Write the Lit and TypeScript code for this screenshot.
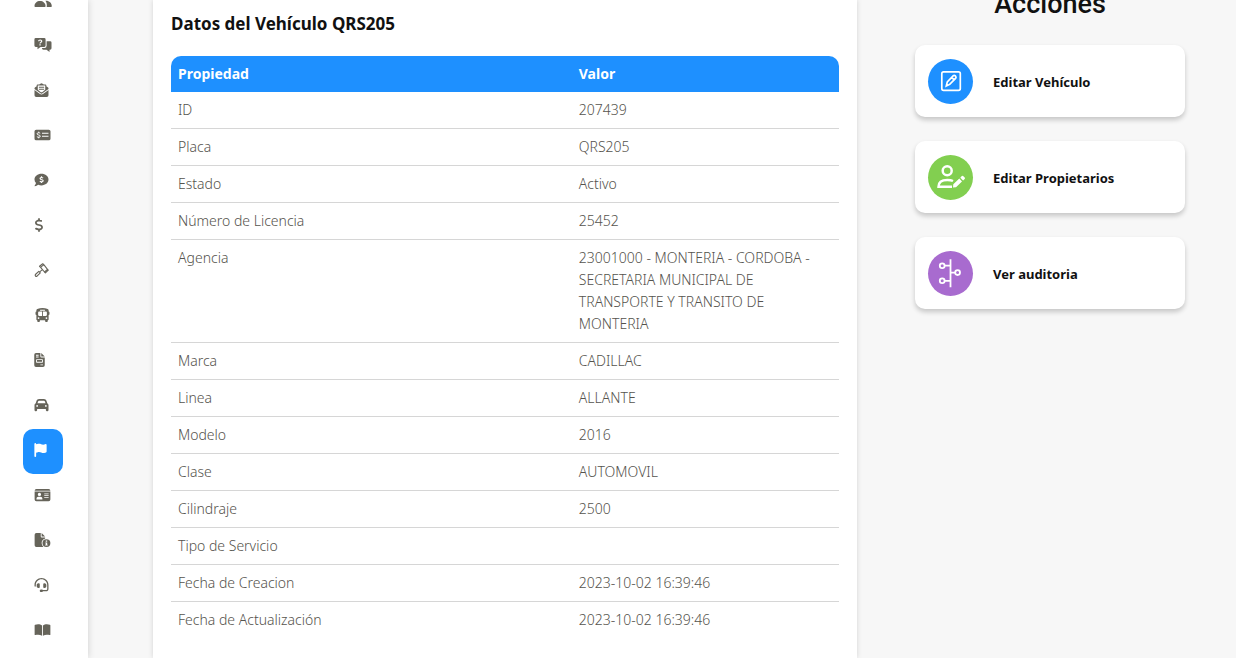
import { LitElement, html, css, svg } from "lit";
import type { TemplateResult } from "lit";
import { customElement } from "lit/decorators.js";
import { classMap } from "lit/directives/class-map.js";

interface NavIcon {
  label: string;
  width: number;
  viewBox: string;
  art: TemplateResult;
  active?: boolean;
}

interface Action {
  label: string;
  tone: string;
  art: TemplateResult;
}

const NAV: NavIcon[] = [
  {
    label: "Usuarios",
    width: 18,
    viewBox: "0 0 18 14",
    art: svg`<circle cx="6" cy="3.5" r="3.5"/><path d="M0.5 13.2C0.5 10 3 8 6 8s5.600 2 5.600 5.200q0 .8-.8.8H1.300q-.8 0-.8-.8z"/><path d="M11.400 7.800c3.400-.4 6.400 2 6.400 5.400q0 .8-.8.8h-4.300c.4-2.600-.1-4.600-1.300-6.200z"/><path d="M10.600 6.900a3.500 3.500 0 1 0 0-6.600q2 3 0 6.600z"/>`,
  },
  {
    label: "Preguntas",
    width: 18,
    viewBox: "0 0 18 14",
    art: svg`<path fill-rule="evenodd" d="M1.800 0h8.400Q11.600 0 11.600 1.400v6.200Q11.600 9 10.200 9H6.600L3.500 11.200V9H1.800Q.4 9 .4 7.600V1.400Q.4 0 1.800 0zM4.100 3.300h1.200c0-.5.3-.7.800-.7s.9.2.9.7-.3.7-.8 1c-.5.3-.7.7-.7 1.200h1.200c0-.4.2-.5.6-.8.6-.4 1-.8 1-1.500 0-1.100-.9-1.800-2.100-1.800s-2.100.7-2.100 1.900zM5.400 6.200v1.200h1.300V6.200z"/><path d="M12.600 3.200h3.500q1.400 0 1.400 1.400v5.700q0 1.400-1.400 1.400h-.6V14l-3-2.300H9.300q-1.300 0-1.400-1.700h2.600q2.100 0 2.100-2.200z"/>`,
  },
  {
    label: "Correo",
    width: 15,
    viewBox: "0 0 512 512",
    art: svg`<path d="M215 24q41-30 82 0l42 28h61q32 0 32 32v34l65 48q15 12 15 31v19L306 370q-50 38-100 0L0 216v-19q0-19 15-31l65-48V84q0-32 32-32h61zM120 90v160l113 84q23 17 46 0l113-84V90zM160 135h192v36H160zm0 73h192v36H160zM0 256l187 140q69 50 138 0l187-140v192q0 64-64 64H64q-64 0-64-64z" fill-rule="evenodd"/>`,
  },
  {
    label: "Comparendos",
    width: 17,
    viewBox: "0 0 16 14",
    art: svg`<path fill-rule="evenodd" d="M1.700 1.700h12.600Q16 1.700 16 3.300v7.400q0 1.600-1.700 1.600H1.700Q0 12.300 0 10.700V3.300Q0 1.700 1.700 1.700zM7.500 4.700v1h6.500v-1zm0 3v1h6.500v-1z"/><path d="M5.700 5.200C4.700 4.500 2.600 4.600 2.600 5.800c0 1.600 3.200.8 3.200 2.400 0 1.300-2.300 1.300-3.400.5M4.200 3.700v1m0 4.500v1.100" fill="none" stroke="#fff" stroke-width="1"/>`,
  },
  {
    label: "Cobros",
    width: 15,
    viewBox: "0 0 14 14",
    art: svg`<path d="M7 .8c3.900 0 7 2.500 7 5.800s-3.100 5.800-7 5.800q-1.700 0-3.300-.6Q2 13.100.4 13.200q-.6-.1-.2-.6 1-1.100 1.300-2.500Q0 8.600 0 6.600C0 3.300 3.100.8 7 .8z"/><path d="M8.600 5C7.700 4.300 5.500 4.400 5.500 5.600c0 1.600 3.200.7 3.200 2.200 0 1.300-2.300 1.300-3.400.5M7 3.300v1m0 4.500v1.100" fill="none" stroke="#fff" stroke-width="1.100"/>`,
  },
  {
    label: "Pagos",
    width: 10,
    viewBox: "0 0 320 512",
    art: svg`<path d="M160 0c17.700 0 32 14.300 32 32V67.700c1.600 .2 3.100 .4 4.700 .7c.4 .1 .7 .1 1.100 .2l48 8.800c17.400 3.200 28.900 19.900 25.700 37.200s-19.900 28.900-37.200 25.700l-47.500-8.700c-31.300-4.600-58.900-1.500-78.300 6.200s-27.200 18.300-29 28.100c-2 10.700-.5 16.700 1.200 20.400c1.800 3.900 5.500 8.300 12.800 13.200c16.300 10.700 41.300 17.700 73.700 26.300l2.900 .8c28.600 7.600 63.600 16.800 89.600 33.800c14.200 9.300 27.600 21.900 35.900 39.500c8.500 17.900 10.300 37.900 6.400 59.200c-6.900 38-33.100 63.400-65.600 76.700c-13.700 5.600-28.600 9.200-44.400 11V480c0 17.700-14.300 32-32 32s-32-14.300-32-32V445.100c-.4-.1-.9-.1-1.300-.2c-24.600-3.800-64.700-14.300-91.700-26.300c-16.100-7.200-23.400-26.100-16.200-42.200s26.100-23.400 42.200-16.200c20.900 9.300 55.300 18.500 75.200 21.600c31.900 4.700 58.200 2 76-5.300c16.900-6.900 24.600-16.900 26.800-28.900c1.900-10.600 .4-16.700-1.300-20.400c-1.900-4-5.600-8.400-13-13.300c-16.400-10.700-41.500-17.700-74-26.300l-2.800-.7C119.400 279.300 84.400 270 58.400 253c-14.200-9.300-27.500-22-35.800-39.600c-8.400-17.900-10.100-37.900-6.100-59.200C23.700 116 52.300 91.200 84.800 78.300c13.300-5.300 27.900-8.900 43.200-11V32c0-17.700 14.300-32 32-32z"/>`,
  },
  {
    label: "Resoluciones",
    width: 15,
    viewBox: "0 0 14 14",
    art: svg`<g fill="none" stroke="currentColor" stroke-width="1.100" stroke-linejoin="round" stroke-linecap="round"><path d="M5 3.300L8.200.7l1.100 1-3.200 2.700zM10 9l3-2.700.8.9-2.900 2.700zM6.100 4.400L10 9M9.300 1.700L13 6.300M7.600 6.900L5.800 8.400M.9 11.500l3.400-3.200 1.500 1.500-3.300 3.400q-.8.5-1.500-.2-.5-.8-.1-1.500z"/></g>`,
  },
  {
    label: "Transporte",
    width: 17,
    viewBox: "0 0 576 512",
    art: svg`<path d="M288 0C422.400 0 512 35.200 512 80V128c17.700 0 32 14.300 32 32v64c0 17.700-14.300 32-32 32V416c0 17.700-14.300 32-32 32v32c0 17.700-14.300 32-32 32H416c-17.700 0-32-14.300-32-32V448H192v32c0 17.700-14.300 32-32 32H128c-17.700 0-32-14.300-32-32V448c-17.700 0-32-14.300-32-32V256c-17.700 0-32-14.300-32-32V160c0-17.700 14.300-32 32-32V80C64 35.200 153.600 0 288 0zM128 160v96c0 17.700 14.300 32 32 32H272V128H160c-17.700 0-32 14.300-32 32zM304 288H416c17.700 0 32-14.300 32-32V160c0-17.700-14.300-32-32-32H304V288zM144 400a32 32 0 1 0 0-64 32 32 0 1 0 0 64zm288 0a32 32 0 1 0 0-64 32 32 0 1 0 0 64zM384 80c0-8.800-7.200-16-16-16H208c-8.800 0-16 7.200-16 16s7.200 16 16 16H368c8.800 0 16-7.200 16-16z"/>`,
  },
  {
    label: "Facturas",
    width: 11,
    viewBox: "0 0 384 512",
    art: svg`<path fill-rule="evenodd" d="M64 0h160v128q0 32 32 32h128v288q0 64-64 64H64Q0 512 0 448V64Q0 0 64 0zm192 0l128 128H256zM64 64v32h96V64zm0 64v32h96v-32zm32 96q-32 0-32 32v64q0 32 32 32h192q32 0 32-32v-64q0-32-32-32zm0 32h192v64H96zm128 160v32h96v-32z"/>`,
  },
  {
    label: "Trámites",
    width: 15,
    viewBox: "0 0 512 512",
    art: svg`<path d="M135.200 117.400L109.100 192H402.900l-26.100-74.600C372.300 104.600 360.200 96 346.600 96H165.400c-13.600 0-25.700 8.600-30.200 21.400zM39.600 196.800L74.800 96.300C88.300 57.800 124.600 32 165.400 32H346.600c40.800 0 77.100 25.800 90.600 64.300l35.200 100.500c23.200 9.600 39.600 32.500 39.600 59.200V448c0 17.700-14.300 32-32 32H448c-17.700 0-32-14.300-32-32V400H96v48c0 17.700-14.300 32-32 32H32c-17.700 0-32-14.300-32-32V256c0-26.700 16.400-49.600 39.600-59.200zM128 288a32 32 0 1 0-64 0 32 32 0 1 0 64 0zm288 32a32 32 0 1 0 0-64 32 32 0 1 0 0 64z"/>`,
  },
  {
    label: "Vehículos",
    width: 13,
    viewBox: "0 0 448 512",
    active: true,
    art: svg`<path d="M64 32C64 14.300 49.700 0 32 0S0 14.300 0 32V480c0 17.700 14.300 32 32 32s32-14.300 32-32V352l64.300-16.100c41.100-10.300 84.600-5.500 122.500 13.400c44.200 22.100 95.500 24.800 141.700 7.400l34.700-13c12.500-4.700 20.800-16.600 20.800-30V66.100c0-23-24.200-38-44.800-27.700l-9.600 4.800c-46.300 23.200-100.800 23.200-147.100 0c-35.100-17.600-75.400-22-113.500-12.500L64 48V32z"/>`,
  },
  {
    label: "Licencias",
    width: 17,
    viewBox: "0 0 576 512",
    art: svg`<path fill-rule="evenodd" d="M0 96q0-64 64-64h448q64 0 64 64zm0 32h576v288q0 64-64 64H64q-64 0-64-64zm176 48a60 60 0 1 0 0 120 60 60 0 1 0 0-120zM64 405q0 11 11 11h202q11 0 11-11 0-85-80-85h-64q-80 0-80 85zM352 200v32h160v-32zm0 64v32h160v-32zm0 64v32h160v-32z"/>`,
  },
  {
    label: "Informes",
    width: 17,
    viewBox: "0 0 576 512",
    art: svg`<path fill-rule="evenodd" d="M0 64Q0 0 64 0h160v128q0 32 32 32h128v38q-128 38-128 170 0 88 65 144H64q-64 0-64-64zM256 0l128 128H256zM432 224a144 144 0 1 0 0 288 144 144 0 1 0 0-288zm-26 48h54v50h-54zm-16 74h70v80h20v32H384v-32h22v-48h-16z"/>`,
  },
  {
    label: "Soporte",
    width: 15,
    viewBox: "0 0 512 512",
    art: svg`<path d="M256 48C141 48 48 141 48 256v40c0 13-11 24-24 24S0 309 0 296V256C0 115 115 0 256 0S512 115 512 256V400c0 49-39 88-88 88H313c-8 14-24 24-41 24H240c-27 0-48-21-48-48s21-48 48-48h32c18 0 33 10 41 24H424c22 0 40-18 40-40V256C464 141 371 48 256 48zM144 192h16c18 0 32 14 32 32V336c0 18-14 32-32 32H144c-35 0-64-29-64-64V256c0-35 29-64 64-64zm208 0h16c35 0 64 29 64 64v48c0 35-29 64-64 64H352c-18 0-32-14-32-32V224c0-18 14-32 32-32z"/>`,
  },
  {
    label: "Manual",
    width: 17,
    viewBox: "0 0 576 512",
    art: svg`<path d="M272 88v376c-70-40-160-48-242-24Q0 450 0 424V92q0-22 20-30c84-34 190-26 252 26zM304 88v376c70-40 160-48 242-24q30 10 30-16V92q0-22-20-30c-84-34-190-26-252 26z"/>`,
  },
];

const ROWS: [string, string][] = [
  ["ID", "207439"],
  ["Placa", "QRS205"],
  ["Estado", "Activo"],
  ["Número de Licencia", "25452"],
  ["Agencia", "23001000 - MONTERIA - CORDOBA - SECRETARIA MUNICIPAL DE TRANSPORTE Y TRANSITO DE MONTERIA"],
  ["Marca", "CADILLAC"],
  ["Linea", "ALLANTE"],
  ["Modelo", "2016"],
  ["Clase", "AUTOMOVIL"],
  ["Cilindraje", "2500"],
  ["Tipo de Servicio", ""],
  ["Fecha de Creacion", "2023-10-02 16:39:46"],
  ["Fecha de Actualización", "2023-10-02 16:39:46"],
];

const ACTIONS: Action[] = [
  {
    label: "Editar Vehículo",
    tone: "blue",
    art: svg`<rect x="13.800" y="12.800" width="18.500" height="18.500" rx="1.800" stroke-width="1.700"/><path d="M18.300 27l1-4.200 5.800-6q1.200-.9 2.400.2 1.100 1.200.1 2.400l-5.900 6zM23.700 18.300l2.500 2.600" stroke-width="1.700"/>`,
  },
  {
    label: "Editar Propietarios",
    tone: "green",
    art: svg`<circle cx="19.200" cy="15.700" r="4.500" stroke-width="2.500"/><path d="M24 31.700H10.500c0-4.600 3.100-6.700 8.800-6.700q3.700 0 5.700 1" stroke-width="2.500"/><path d="M25 32.600l.3-3.300 6-5.700 2.700 2.800-6 5.900zM32.300 22.700l1.500-1.600q.8-.6 1.600.1l1.300 1.300q.6.8 0 1.500l-1.600 1.500z" fill="#fff" stroke="none"/>`,
  },
  {
    label: "Ver auditoria",
    tone: "purple",
    art: svg`<path d="M22.500 8.300v28M16.800 14.700h5.700M16.800 29.800h5.700M22.500 21.600h4.500" stroke-width="1.800"/><circle cx="14.200" cy="14.700" r="2.400" stroke-width="1.800"/><circle cx="14.200" cy="29.800" r="2.400" stroke-width="1.800"/><circle cx="29.600" cy="21.600" r="2.400" stroke-width="1.800"/>`,
  },
];

@customElement("side-nav")
class SideNav extends LitElement {
  static styles = css`
    :host {
      display: block;
      flex: 0 0 88px;
      background: #fff;
      box-shadow: 0 0 7px rgba(0, 0, 0, 0.17);
    }
    .list {
      list-style: none;
      margin: -21px 0 0;
      padding: 0 25px 0 23px;
    }
    .link {
      display: flex;
      align-items: center;
      box-sizing: border-box;
      height: 45px;
      padding: 0 0 3px 11px;
      border-radius: 10px;
      color: #66645a;
    }
    .link.active {
      background: #1e90ff;
      color: #fff;
    }
    .icon {
      display: block;
      height: 14px;
      fill: currentColor;
    }
  `;

  render() {
    return html`<nav aria-label="Principal">
      <ul class="list">
        ${NAV.map(
          (n) => html`<li>
            <a class=${classMap({ link: true, active: !!n.active })} href="#" aria-label=${n.label}>
              <svg class="icon" width=${n.width} height="14" viewBox=${n.viewBox} aria-hidden="true">${n.art}</svg>
            </a>
          </li>`
        )}
      </ul>
    </nav>`;
  }
}

@customElement("vehicle-card")
class VehicleCard extends LitElement {
  static styles = css`
    :host {
      display: block;
      box-sizing: border-box;
      padding: 10px 18px 20px;
      background: #fff;
      box-shadow: 0 0 5px rgba(0, 0, 0, 0.15);
      font-family: "Segoe UI", "Noto Sans", "Open Sans", sans-serif;
    }
    .title {
      margin: 0 0 18px;
      font-size: 17px;
      font-weight: 700;
      line-height: 28px;
      color: #111;
    }
    .table {
      width: 100%;
      table-layout: fixed;
      border-collapse: separate;
      border-spacing: 0;
      font-size: 14px;
      line-height: 22px;
      color: #55534d;
    }
    .head {
      padding: 7px;
      background: #1e90ff;
      color: #fff;
      font-weight: 700;
      text-align: left;
    }
    .head.name {
      width: 60%;
      box-sizing: border-box;
      border-top-left-radius: 10px;
    }
    .head.value {
      border-top-right-radius: 10px;
    }
    .cell {
      height: 22px;
      padding: 7px;
      border-bottom: 1px solid #d6d6d6;
      font-weight: 300;
      text-align: left;
      vertical-align: top;
    }
    .row:last-child .cell {
      border-bottom: 0;
    }
  `;

  render() {
    return html`<h2 class="title">Datos del Vehículo QRS205</h2>
      <table class="table">
        <thead>
          <tr>
            <th class="head name" scope="col">Propiedad</th>
            <th class="head value" scope="col">Valor</th>
          </tr>
        </thead>
        <tbody>
          ${ROWS.map(
            ([name, value]) => html`<tr class="row">
              <th class="cell" scope="row">${name}</th>
              <td class="cell">${value}</td>
            </tr>`
          )}
        </tbody>
      </table>`;
  }
}

@customElement("action-panel")
class ActionPanel extends LitElement {
  static styles = css`
    :host {
      display: block;
    }
    .title {
      margin: -14px 0 23px;
      font-family: Roboto, sans-serif;
      font-size: 27px;
      font-weight: 500;
      line-height: 36px;
      text-align: center;
      color: #111;
    }
    .list {
      display: grid;
      gap: 24px;
    }
    .action {
      display: flex;
      align-items: center;
      gap: 20px;
      width: 100%;
      min-height: 72px;
      padding: 0 13px;
      border: 0;
      border-radius: 10px;
      background: #fff;
      box-shadow: 0 3px 5px rgba(0, 0, 0, 0.2);
      font-family: "Segoe UI", "Noto Sans", "Open Sans", sans-serif;
      font-size: 13px;
      font-weight: 700;
      line-height: 20px;
      text-align: left;
      color: #111;
    }
    .label {
      padding-top: 2px;
    }
    .badge {
      flex: none;
      width: 45px;
      height: 45px;
      border-radius: 50%;
      fill: none;
      stroke: #fff;
    }
    .blue {
      background: #1e90ff;
    }
    .green {
      background: #82cf50;
    }
    .purple {
      background: #a86bcf;
    }
  `;

  render() {
    return html`<h2 class="title">Acciones</h2>
      <div class="list">
        ${ACTIONS.map(
          (a) => html`<button class="action" type="button">
            <svg class="badge ${a.tone}" viewBox="0 0 45 45" aria-hidden="true">${a.art}</svg>
            <span class="label">${a.label}</span>
          </button>`
        )}
      </div>`;
  }
}

@customElement("app-root")
class AppRoot extends LitElement {
  static styles = css`
    :host {
      display: flex;
      height: 100vh;
      overflow: hidden;
      background: #f7f7f7;
    }
    .main {
      flex: 1;
      min-width: 0;
      display: grid;
      grid-template-columns: minmax(0, 1fr) 270px;
      gap: 58px;
      padding: 0 51px 0 65px;
    }
  `;

  render() {
    return html`<side-nav></side-nav>
      <main class="main">
        <vehicle-card></vehicle-card>
        <action-panel></action-panel>
      </main>`;
  }
}
